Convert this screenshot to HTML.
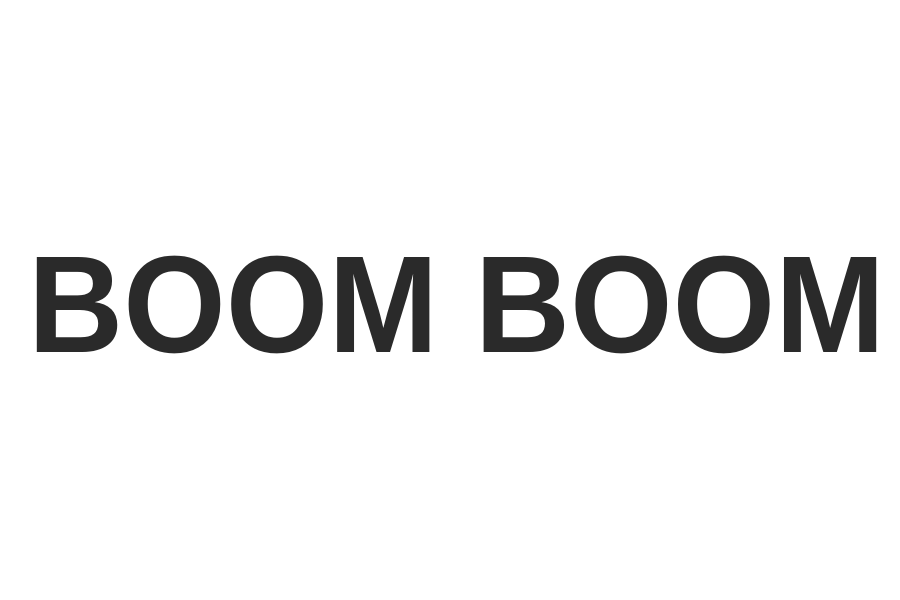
<!DOCTYPE html>
<html><head><style>
html,body{margin:0;padding:0;background:#fff;width:900px;height:600px;overflow:hidden}
</style></head><body>
<svg width="900" height="600" xmlns="http://www.w3.org/2000/svg">
<text x="28" y="352" font-family="Liberation Sans, Arial, sans-serif" font-weight="bold" font-size="138" fill="#2a2a2a" textLength="857" lengthAdjust="spacingAndGlyphs">BOOM BOOM</text>
</svg>
</body></html>
